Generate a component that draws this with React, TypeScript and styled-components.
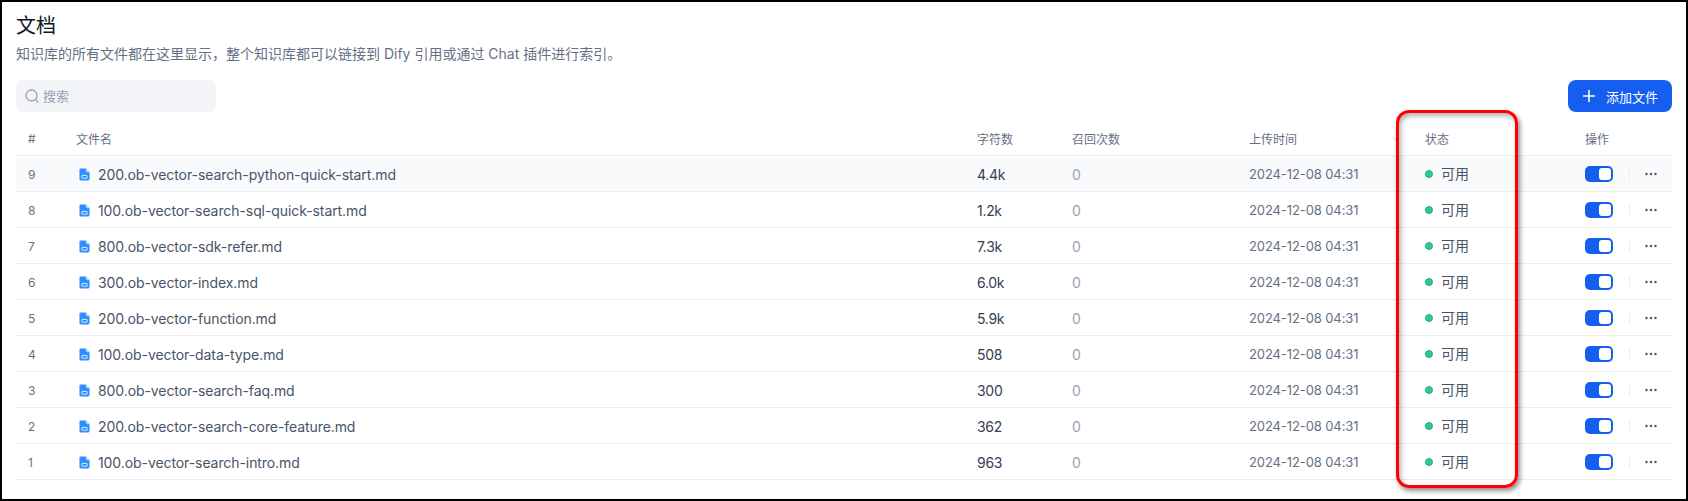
import styled, { createGlobalStyle } from "styled-components";

const GlobalStyle = createGlobalStyle`
  html, body {
    margin: 0;
    padding: 0;
    background: #000;
  }
  * {
    box-sizing: border-box;
  }
`;

const Page = styled.div`
  position: relative;
  width: 1688px;
  height: 501px;
  padding: 14px 14px 0;
  border: 2px solid #000;
  background: #fff;
  font-family: Inter, "Noto Sans CJK SC", sans-serif;
  color: #101828;
  overflow: hidden;
`;

const Title = styled.h1`
  margin: 0;
  font-size: 20px;
  line-height: 20px;
  font-weight: 400;
  color: #101828;
`;

const Description = styled.p`
  margin: 8px 0 0;
  font-size: 14px;
  line-height: 20px;
  color: #667085;
`;

const Toolbar = styled.div`
  display: flex;
  justify-content: space-between;
  align-items: center;
  margin-top: 16px;
`;

const SearchBox = styled.div`
  display: flex;
  align-items: center;
  gap: 3px;
  width: 200px;
  height: 32px;
  padding: 0 8px 1px;
  border-radius: 8px;
  background: #f2f4f7;
  font-size: 13px;
  color: #98a2b3;
`;

const AddButton = styled.button`
  display: flex;
  align-items: center;
  justify-content: center;
  gap: 10px;
  width: 104px;
  height: 32px;
  padding: 0;
  border: none;
  border-radius: 8px;
  background: #155eef;
  color: #fff;
  font-family: inherit;
  font-size: 13px;
`;

const columns = "60px 901px 95px 177px 176px 160px 87px";

const HeadRow = styled.div`
  display: grid;
  grid-template-columns: ${columns};
  align-items: center;
  height: 44px;
  padding-top: 10px;
  border-bottom: 1px solid #eaecf0;
  font-size: 12px;
  color: #667085;
`;

const Row = styled.div<{ $active?: boolean }>`
  display: grid;
  grid-template-columns: ${columns};
  align-items: center;
  height: 36px;
  padding-top: 1px;
  border-bottom: 1px solid #eaecf0;
  background: ${(p) => (p.$active ? "#f9fafb" : "#fff")};
  font-size: 14px;
  color: #475467;
`;

const IndexCell = styled.div`
  padding-left: 12px;
  font-size: 12px;
  color: #667085;
`;

const SortCell = styled.div`
  display: flex;
  align-items: center;
  justify-content: space-between;
  padding-right: 24px;
`;

const NameCell = styled.div`
  display: flex;
  align-items: center;
  gap: 8px;
  padding-left: 3px;
  letter-spacing: -0.08px;
`;

const Count = styled.div`
  letter-spacing: -0.3px;
  color: #344054;
`;

const Hits = styled.div`
  color: #98a2b3;
`;

const DateCell = styled.div`
  font-size: 13px;
  letter-spacing: -0.1px;
  color: #667085;
`;

const Status = styled.div`
  display: flex;
  align-items: center;
  gap: 8px;
  margin-top: -1px;
  font-size: 14px;
  color: #475467;
`;

const StatusLabel = styled.span`
  margin-bottom: 2px;
`;

const Dot = styled.span`
  width: 8px;
  height: 8px;
  border: 1px solid #17b26a;
  border-radius: 50%;
  background: #38c793;
`;

const Actions = styled.div`
  display: flex;
  align-items: center;
  margin-top: -1px;
`;

const Toggle = styled.span`
  display: flex;
  justify-content: flex-end;
  align-items: center;
  width: 28px;
  height: 16px;
  padding: 2px;
  border-radius: 5px;
  background: #155eef;
`;

const Knob = styled.span`
  width: 12px;
  height: 12px;
  border-radius: 3px;
  background: #fff;
`;

const Divider = styled.span`
  width: 1px;
  height: 12px;
  margin: 0 15px 0 16px;
  background: #eaecf0;
`;

const Highlight = styled.div`
  position: absolute;
  left: 1394px;
  top: 108px;
  width: 122px;
  height: 378px;
  border: 3px solid #f00;
  border-radius: 13px;
  box-shadow: 2px 3px 5px rgba(0, 0, 0, 0.45), inset 2px 3px 5px rgba(0, 0, 0, 0.3);
  pointer-events: none;
`;

const files = [
  { no: 9, name: "200.ob-vector-search-python-quick-start.md", words: "4.4k" },
  { no: 8, name: "100.ob-vector-search-sql-quick-start.md", words: "1.2k" },
  { no: 7, name: "800.ob-vector-sdk-refer.md", words: "7.3k" },
  { no: 6, name: "300.ob-vector-index.md", words: "6.0k" },
  { no: 5, name: "200.ob-vector-function.md", words: "5.9k" },
  { no: 4, name: "100.ob-vector-data-type.md", words: "508" },
  { no: 3, name: "800.ob-vector-search-faq.md", words: "300" },
  { no: 2, name: "200.ob-vector-search-core-feature.md", words: "362" },
  { no: 1, name: "100.ob-vector-search-intro.md", words: "963" },
];

function FileIcon() {
  return (
    <svg width="11" height="13" viewBox="0 0 12 14">
      <path d="M2 0.5H7.5L11.5 4.5V12a1.5 1.5 0 0 1-1.5 1.5H2A1.5 1.5 0 0 1 .5 12V2A1.5 1.5 0 0 1 2 .5Z" fill="#2e90fa" />
      <path d="M7.5 .5V3a1.5 1.5 0 0 0 1.5 1.5H11.5Z" fill="#b2ddff" />
      <rect x="3" y="8" width="6" height="3" rx="0.8" fill="none" stroke="#fff" strokeWidth="0.9" />
    </svg>
  );
}

function SearchIcon() {
  return (
    <svg width="16" height="16" viewBox="0 0 16 16" fill="none" stroke="#98a2b3" strokeWidth="1.3" strokeLinecap="round">
      <circle cx="7.5" cy="7.5" r="5.5" />
      <path d="M11.6 11.6L14 14" />
    </svg>
  );
}

function PlusIcon() {
  return (
    <svg width="14" height="14" viewBox="0 0 14 14" stroke="#fff" strokeWidth="1.6" strokeLinecap="round">
      <path d="M7 1.5V12.5M1.5 7H12.5" />
    </svg>
  );
}

function MoreIcon() {
  return (
    <svg width="12" height="12" viewBox="0 0 12 12" fill="#475467">
      <circle cx="1.5" cy="6" r="1.2" />
      <circle cx="6" cy="6" r="1.2" />
      <circle cx="10.5" cy="6" r="1.2" />
    </svg>
  );
}

function ChevronIcon() {
  return (
    <svg width="10" height="10" viewBox="0 0 10 10" fill="none" stroke="#d0d5dd" strokeWidth="1">
      <path d="M2 3.5L5 6.5L8 3.5" />
    </svg>
  );
}

export default function App() {
  return (
    <>
      <GlobalStyle />
      <Page>
        <Title>文档</Title>
        <Description>知识库的所有文件都在这里显示，整个知识库都可以链接到 Dify 引用或通过 Chat 插件进行索引。</Description>
        <Toolbar>
          <SearchBox>
            <SearchIcon />
            搜索
          </SearchBox>
          <AddButton>
            <PlusIcon />
            添加文件
          </AddButton>
        </Toolbar>
        <HeadRow>
          <IndexCell>#</IndexCell>
          <div>文件名</div>
          <div>字符数</div>
          <div>召回次数</div>
          <SortCell>
            上传时间
            <ChevronIcon />
          </SortCell>
          <div>状态</div>
          <div>操作</div>
        </HeadRow>
        {files.map((file, i) => (
          <Row key={file.no} $active={i === 0}>
            <IndexCell>{file.no}</IndexCell>
            <NameCell>
              <FileIcon />
              {file.name}
            </NameCell>
            <Count>{file.words}</Count>
            <Hits>0</Hits>
            <DateCell>2024-12-08 04:31</DateCell>
            <Status>
              <Dot />
              <StatusLabel>可用</StatusLabel>
            </Status>
            <Actions>
              <Toggle>
                <Knob />
              </Toggle>
              <Divider />
              <MoreIcon />
            </Actions>
          </Row>
        ))}
        <Highlight />
      </Page>
    </>
  );
}
